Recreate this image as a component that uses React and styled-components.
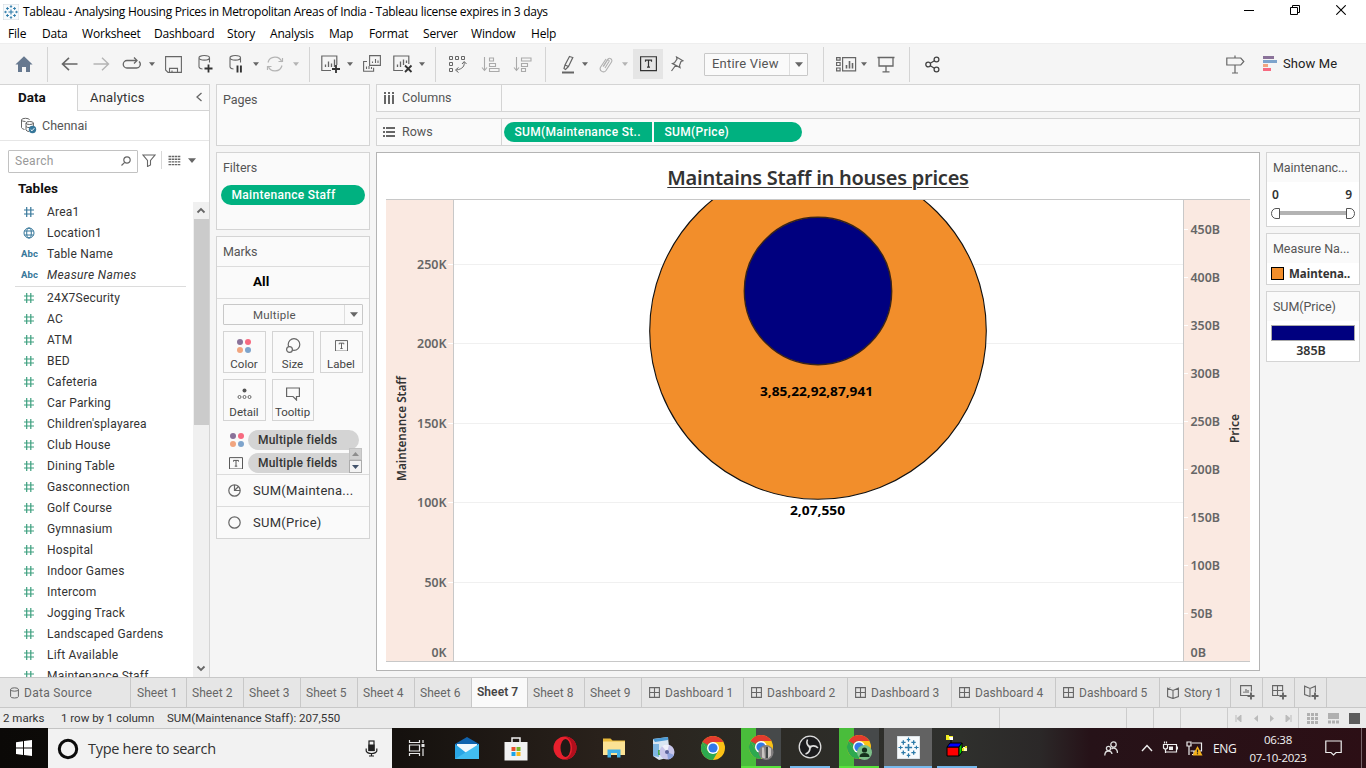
import React from "react";
import styled, { createGlobalStyle } from "styled-components";

const UI = '"Roboto", "Liberation Sans", sans-serif';
const SEGOE = '"Open Sans", "Noto Sans", sans-serif';
const VIZ = '"Noto Sans", "Open Sans", sans-serif';
const LINE = "#d4d4d4";
const GREEN = "#00b180";
const GREY = "#666";

const Global = createGlobalStyle`
  * { box-sizing: border-box; }
  body { margin: 0; background: #f5f5f5; overflow: hidden; }
`;

const Window = styled.div`
  width: 1366px;
  height: 768px;
  display: flex;
  flex-direction: column;
  background: #f5f5f5;
  font: 12px ${UI};
  color: #333;
  white-space: nowrap;
  overflow: hidden;
`;

const Svg = styled.svg`
  display: block;
  flex: none;
  fill: none;
  stroke: ${(p) => p.$c || GREY};
  stroke-width: ${(p) => p.$sw || 1};
`;

function Icon({ w, h, c, sw, children }) {
  return (
    <Svg width={w} height={h} viewBox={`0 0 ${w} ${h}`} $c={c} $sw={sw}>
      {children}
    </Svg>
  );
}

/* ---------- title bar and menu ---------- */

const TitleBar = styled.header`
  height: 24px;
  flex: none;
  display: flex;
  align-items: center;
  background: #fff;
  padding-left: 3px;
  font: 12px ${SEGOE};
  letter-spacing: -0.3px;
  color: #000;
`;
const TitleText = styled.span`
  margin-left: 4px;
  padding-bottom: 1px;
  flex: 1;
`;
const WindowButtons = styled.div`
  display: flex;
  gap: 36px;
  padding-right: 20px;
  margin-top: -4px;
`;
const MenuBar = styled.nav`
  height: 19px;
  flex: none;
  display: flex;
  background: #fff;
  padding-left: 8px;
  font: 12px/19px ${SEGOE};
  letter-spacing: -0.18px;
  color: #000;
`;
const MenuItem = styled.span`
  width: ${(p) => p.$w}px;
`;

const MENU = [
  ["File", 34], ["Data", 40], ["Worksheet", 72], ["Dashboard", 73], ["Story", 43], ["Analysis", 59],
  ["Map", 40], ["Format", 54], ["Server", 48], ["Window", 60], ["Help", 40],
];

function TableauMark({ size }) {
  return (
    <Svg width={size} height={size} viewBox="0 0 16 16" $c="#2c7aa8">
      <rect x="0" y="0" width="16" height="16" fill="#f7fafc" stroke="#b9c3ca" strokeWidth=".6" />
      <path d="M8 5.5v5M5.5 8h5" strokeWidth="1.1" />
      <path d="M8 1v3M6.8 2.5h2.4M8 12v3M6.8 13.5h2.4M1 8h3M2.5 6.8v2.4M12 8h3M13.5 6.8v2.4" strokeWidth=".8" />
      <path d="M4.4 3v3M3 4.5h3M11.6 3v3M10 4.5h3M4.4 10v3M3 11.5h3M11.6 10v3M10 11.5h3" strokeWidth=".9" />
    </Svg>
  );
}

/* ---------- toolbar ---------- */

const Toolbar = styled.div`
  height: 41px;
  flex: none;
  display: flex;
  align-items: center;
  background: #f5f5f5;
  border-top: 1px solid #eee;
`;
const Slot = styled.div`
  width: ${(p) => p.$w}px;
  height: 34px;
  margin-left: ${(p) => p.$gap}px;
  flex: none;
  display: flex;
  align-items: center;
  justify-content: center;
`;
const Separator = styled.div`
  width: 1px;
  height: 35px;
  margin-left: ${(p) => p.$gap}px;
  background: ${LINE};
  flex: none;
`;
const Active = styled.div`
  width: 30px;
  height: 30px;
  margin-left: 5px;
  background: #e5e5e5;
  display: flex;
  align-items: center;
  justify-content: center;
`;
const Select = styled.div`
  width: ${(p) => p.$w}px;
  height: ${(p) => p.$h}px;
  margin-left: ${(p) => p.$gap || 0}px;
  border: 1px solid #c8c8c8;
  border-radius: 1px;
  background: #fafafa;
  display: flex;
  align-items: center;
  font-size: ${(p) => p.$size}px;
  letter-spacing: 0.2px;
  color: #555;
`;
const SelectLabel = styled.span`
  flex: 1;
  padding-left: ${(p) => p.$pad}px;
  padding-bottom: ${(p) => p.$lift || 0}px;
`;
const SelectArrow = styled.span`
  width: 18px;
  height: 100%;
  border-left: 1px solid #dedede;
  display: flex;
  align-items: center;
  justify-content: center;
`;
const ShowMe = styled.div`
  margin-left: 18px;
  display: flex;
  align-items: center;
  gap: 6px;
  font-size: 13px;
  letter-spacing: 0.1px;
  color: #222;
`;
const ShowMeText = styled.span`
  padding-bottom: 2px;
`;

const Caret = ({ c = GREY, big }) => (
  <Svg width={big ? 8 : 6} height={big ? 5 : 4} viewBox="0 0 8 5">
    <path d="M0 .3h8L4 5z" fill={c} stroke="none" />
  </Svg>
);

const HomeIcon = () => (
  <Icon w={18} h={18}>
    <path d="M9 1.3 17.6 9.5H15V17H11v-5H7v5H3V9.500H.4z" fill="#66788f" stroke="none" />
  </Icon>
);
const Cylinder = () => <path d="M2 3.800v9.200q.6 1.800 3.500 2M12.500 3.800v4.700M2 3.800a5.200 2.300 0 1 0 10.500 0a5.200 2.300 0 1 0-10.500 0" />;
const MiniBars = () => <path d="M4.500 12V9.500M7.500 12V6.500M10.500 12V8.500M13.500 12V4.500" strokeWidth="1.300" />;

const BackIcon = () => <Icon w={17} h={14} sw={1.6}><path d="M8 .8 1.500 7 8 13.200M1.500 7H16.500" /></Icon>;
const ForwardIcon = () => <Icon w={17} h={14} sw={1.4} c="#b4b4b4"><path d="M9 .8 15.500 7 9 13.200M15.500 7H.5" /></Icon>;
const RedoIcon = () => (
  <Icon w={20} h={14} sw={1.3}>
    <path d="M6.500 3.500H5a3.300 3.300 0 0 0 0 7.500h9.500a3.700 3.700 0 0 0 2.500-6.500M6 3.500h8.500" />
    <path d="M12 .5 15 3.500l-3 3" />
  </Icon>
);
const SaveIcon = () => <Icon w={17} h={17} sw={1.1}><path d="M.6.6h15.800v15.800H3L.6 14zM4.500 16.400v-4h8v4M7 16.400v-2" /></Icon>;
const AddSourceIcon = () => <Icon w={17} h={20} sw={1.100}><Cylinder /><path d="M11.500 10.500v8M7.500 14.500h8" stroke="#333" strokeWidth="1.800" /></Icon>;
const PauseIcon = () => <Icon w={17} h={20} sw={1.100}><Cylinder /><path d="M9.500 11.500v7M12.900 11.500v7" stroke="#333" strokeWidth="1.900" /></Icon>;
const RefreshIcon = () => (
  <Icon w={18} h={18} c="#b4b4b4" sw={1.200}>
    <path d="M2 7.500a7.200 7.200 0 0 1 13.800-.5M16 10.500a7.200 7.200 0 0 1-13.800.5" />
    <path d="M12.500 6.500h4V3M5.500 11.500h-4V15" />
  </Icon>
);
const NewSheetIcon = () => <Icon w={20} h={18} sw={1.200}><path d="M10 15.500H.8V1h15v9" /><MiniBars /><path d="M15 10v8M11 14h8" stroke="#333" strokeWidth="1.800" /></Icon>;
const DuplicateIcon = () => <Icon w={18} h={18} sw={1.100}><path d="M6.600.6h10.800v9.800H6.600zM4 6.500H.6v9.800h10v-3.500M9.500 8V6.500M12.500 8V4M15 8V5.500M3.500 14v-2.500M6 14v-3M8.500 14v-2" /></Icon>;
const ClearIcon = () => <Icon w={20} h={18} sw={1.200}><path d="M10 15.500H.8V1h15v8" /><path d="M4.500 12V9.500M7.500 12V6.500M10.500 10V4.500M13.500 8V5.500" strokeWidth="1.300" /><path d="m12 10.500 6.500 6.500M18.500 10.500 12 17" stroke="#333" strokeWidth="1.800" /></Icon>;
const SwapIcon = () => <Icon w={19} h={18} sw={1}><path d="M1.500 1.500h3v3h-3zM7.500 1.500h3v3h-3zM13.500 1.500h3v3h-3zM1.500 7.500h3v3h-3zM1.500 13.500h3v3h-3zM16 7c1 4-1.500 7-7.500 8M14 9l2.200-2.500L18.500 9M10.500 12.500 7.500 15l3 2.500" /></Icon>;
const SortAscIcon = () => <Icon w={19} h={17} c="#aaa" sw={1.1}><path d="M3.500 1v13M1 11.500l2.500 3 2.500-3M8.500 2h4v3h-4zM8.500 7.500h6v3h-6zM8.500 12.500h9.500v3H8.500z" /></Icon>;
const SortDescIcon = () => <Icon w={19} h={17} c="#aaa" sw={1.1}><path d="M3.500 1v13M1 11.500l2.500 3 2.500-3M8.500 2H18v3H8.500zM8.500 7.500h6v3h-6zM8.500 12.500h4v3h-4z" /></Icon>;
const HighlightIcon = () => <Icon w={15} h={19} sw={1.200}><path d="M8.500 1.500 11.800 2.500 7.500 11.500 4 10zM4 10 3 13.500l1.500 1 3-3" /><path d="M1 17.500h12" strokeWidth="2" /></Icon>;
const ClipIcon = () => <Icon w={14} h={17} c="#b0b0b0" sw={1.1}><path d="M4 10.500 8.500 3.500a2.200 2.200 0 0 1 4 2.500L7 14.500a3.200 3.200 0 0 1-5.500-3.200L7 3M6 12l4-6.500a1 1 0 0 0-1.800-1L4.500 10.500" /></Icon>;
const TextIcon = ({ s = 17, c = "#333" }) => (
  <Svg width={s} height={s * 0.9} viewBox="0 0 17 15" $c={c} $sw={1.2}>
    <path d="M.6.6h15.800v13.800H.6zM5.500 5.500V4h6v1.500M8.500 4v7M7 11h3" />
  </Svg>
);
const PinIcon = () => <Icon w={14} h={16} sw={1.200}><path d="m6.500 1 6.500 3.800-2 .7-1.500 4 .5 2L2.500 7.500l2-.7L7 3.200zM5.500 9.500 1.500 15" /></Icon>;
const CardsIcon = () => <Icon w={21} h={15} sw={1.200}><path d="M6.600.6h13v13.300h-13zM.6.600h3.500v2.600H.6zM.6 5.500h3.500v3H.6zM.6 11h3.500v2.800H.6z" /><path d="M10.500 11.500V8M13.500 11.500V4M16.500 11.500V6" strokeWidth="1.600" /></Icon>;
const PresentIcon = () => <Icon w={18} h={17} sw={1.300}><path d="M.5 1.500h17M2 1.500v8.500h14V1.500M9 10v5.500M5.500 15.800h7" /></Icon>;
const ShareIcon = () => <Icon w={16} h={17} c="#444" sw={1.300}><circle cx="3.200" cy="8.500" r="2.400" /><circle cx="11.500" cy="3.500" r="2.400" /><circle cx="11.500" cy="13.500" r="2.400" /><path d="m5.300 7.200 4.100-2.500M5.300 9.800l4.100 2.500" /></Icon>;
const SignIcon = () => <Icon w={19} h={19} sw={1.200}><path d="M.8 3h14l3 3.500-3 3.500H.8zM9 .5V3M9 10v8M6 18h6" /></Icon>;
const ShowMeIcon = () => (
  <Icon w={14} h={16}>
    <g stroke="none">
      <path d="M0 0h11v3H0z" fill="#8a7299" /><path d="M0 4h14v3H0z" fill="#7ea4cc" />
      <path d="M0 8h5v3H0z" fill="#f1a57f" /><path d="M0 12h8v3H0z" fill="#f76a80" />
    </g>
  </Icon>
);

function ToolbarRow() {
  return (
    <Toolbar>
      <Slot $gap={15} $w={18}><HomeIcon /></Slot>
      <Separator $gap={14} />
      <Slot $gap={13} $w={17}><BackIcon /></Slot>
      <Slot $gap={15} $w={17}><ForwardIcon /></Slot>
      <Slot $gap={12} $w={20}><RedoIcon /></Slot>
      <Slot $gap={7} $w={6}><Caret /></Slot>
      <Slot $gap={10} $w={17}><SaveIcon /></Slot>
      <Slot $gap={15} $w={17}><AddSourceIcon /></Slot>
      <Slot $gap={14} $w={17}><PauseIcon /></Slot>
      <Slot $gap={8} $w={6}><Caret /></Slot>
      <Slot $gap={7} $w={18}><RefreshIcon /></Slot>
      <Slot $gap={9} $w={6}><Caret c="#b4b4b4" /></Slot>
      <Separator $gap={10} />
      <Slot $gap={11} $w={20}><NewSheetIcon /></Slot>
      <Slot $gap={6} $w={6}><Caret /></Slot>
      <Slot $gap={10} $w={18}><DuplicateIcon /></Slot>
      <Slot $gap={12} $w={20}><ClearIcon /></Slot>
      <Slot $gap={6} $w={6}><Caret /></Slot>
      <Separator $gap={10} />
      <Slot $gap={12} $w={19}><SwapIcon /></Slot>
      <Slot $gap={14} $w={19}><SortAscIcon /></Slot>
      <Slot $gap={13} $w={19}><SortDescIcon /></Slot>
      <Separator $gap={13} />
      <Slot $gap={15} $w={15}><HighlightIcon /></Slot>
      <Slot $gap={6} $w={6}><Caret /></Slot>
      <Slot $gap={11} $w={14}><ClipIcon /></Slot>
      <Slot $gap={9} $w={6}><Caret c="#b4b4b4" /></Slot>
      <Active><TextIcon /></Active>
      <Slot $gap={7} $w={14}><PinIcon /></Slot>
      <Select $w={104} $h={23} $gap={20} $size={13}>
        <SelectLabel $pad={7} $lift={2}>Entire View</SelectLabel>
        <SelectArrow><Caret big /></SelectArrow>
      </Select>
      <Separator $gap={15} />
      <Slot $gap={12} $w={21}><CardsIcon /></Slot>
      <Slot $gap={4} $w={6}><Caret /></Slot>
      <Slot $gap={10} $w={18}><PresentIcon /></Slot>
      <Separator $gap={14} />
      <Slot $gap={15} $w={16}><ShareIcon /></Slot>
      <Slot $gap={285} $w={19}><SignIcon /></Slot>
      <ShowMe><ShowMeIcon /><ShowMeText>Show Me</ShowMeText></ShowMe>
    </Toolbar>
  );
}

/* ---------- data pane ---------- */

const Main = styled.main`
  height: 593px;
  flex: none;
  display: flex;
`;
const DataPane = styled.aside`
  width: 210px;
  height: 593px;
  flex: none;
  display: flex;
  flex-direction: column;
  background: #fff;
  border-right: 1px solid ${LINE};
  border-top: 1px solid ${LINE};
  overflow: hidden;
`;
const PaneTabs = styled.div`
  display: flex;
  height: 26px;
  flex: none;
`;
const DataTab = styled.div`
  width: 77px;
  padding-left: 18px;
  font: 700 13.500px/25px ${UI};
  color: #111;
`;
const AnalyticsTab = styled.div`
  flex: 1;
  display: flex;
  align-items: center;
  justify-content: space-between;
  padding: 0 6px 1px 12px;
  background: #fafafa;
  border-left: 1px solid ${LINE};
  border-bottom: 1px solid ${LINE};
  font-size: 13px;
  letter-spacing: 0.2px;
`;
const SourceRow = styled.div`
  height: 30px;
  flex: none;
  display: flex;
  align-items: center;
  gap: 5px;
  padding: 0 0 1px 20px;
  border-bottom: 1px solid #e6e6e6;
  font-size: 12.500px;
  color: #555;
`;
const SearchRow = styled.div`
  height: 24px;
  margin-top: 8px;
  padding-left: 8px;
  flex: none;
  display: flex;
  align-items: center;
`;
const SearchBox = styled.div`
  width: 130px;
  height: 23px;
  border: 1px solid #c2c2c2;
  border-radius: 1px;
  display: flex;
  align-items: center;
  justify-content: space-between;
  padding: 0 6px;
  color: #999;
  letter-spacing: 0.3px;
`;
const SearchTools = styled.div`
  display: flex;
  align-items: center;
  padding: 0 0 2px 4px;
`;
const ToolDivider = styled.span`
  width: 1px;
  height: 18px;
  margin: 0 6px 0 5px;
  background: #d8d8d8;
`;
const ArrowGap = styled.span`
  margin-left: 7px;
`;
const TablesTitle = styled.div`
  height: 28px;
  flex: none;
  padding-left: 18px;
  font: 700 13.500px/31px ${UI};
  color: #111;
`;
const FieldArea = styled.div`
  flex: 1;
  min-height: 0;
  display: flex;
`;
const FieldList = styled.div`
  width: 193px;
  overflow: hidden;
`;
const Field = styled.div`
  height: 21px;
  display: flex;
  align-items: center;
  font-style: ${(p) => (p.$italic ? "italic" : "normal")};
  letter-spacing: ${(p) => (p.$italic ? 0.35 : 0.2)}px;
  color: #333;
`;
const FieldIcon = styled.span`
  width: 47px;
  padding-left: ${(p) => (p.$abc ? 21 : 23)}px;
  flex: none;
  font: 700 9.500px ${UI};
  letter-spacing: 0.1px;
  color: #36779a;
`;
const ListRule = styled.hr`
  height: 1px;
  margin: 1px 7px 0 15px;
  border: 0;
  background: #dcdcdc;
`;
const Scrollbar = styled.div`
  width: 16px;
  margin-top: 1px;
  display: flex;
  flex-direction: column;
  align-items: center;
  background: #f0f0f0;
`;
const ScrollThumb = styled.div`
  width: 15px;
  height: 206px;
  background: #cbcbcb;
  margin-bottom: auto;
`;
const ScrollCap = styled.div`
  height: 17px;
  display: flex;
  align-items: center;
`;

const Hash = ({ c }) => <Icon w={12} h={12} c={c} sw={1.200}><path d="M3.700 1v10M7.800 1v10M1 4h10M1 8h10" /></Icon>;
const Globe = () => <Icon w={12} h={12} c="#36779a"><circle cx="6" cy="6" r="5" /><ellipse cx="6" cy="6" rx="2.300" ry="5" /><path d="M1.500 4h9M1.500 8h9" /></Icon>;

const DIMENSIONS = [["hash", "Area1"], ["globe", "Location1"], ["abc", "Table Name"], ["abc", "Measure Names", true]];
const MEASURES = [
  "24X7Security", "AC", "ATM", "BED", "Cafeteria", "Car Parking", "Children'splayarea", "Club House", "Dining Table",
  "Gasconnection", "Golf Course", "Gymnasium", "Hospital", "Indoor Games", "Intercom", "Jogging Track",
  "Landscaped Gardens", "Lift Available", "Maintenance Staff",
];

function DataPanel() {
  return (
    <DataPane>
      <PaneTabs>
        <DataTab>Data</DataTab>
        <AnalyticsTab>
          Analytics
          <Icon w={8} h={10} sw={1.300}><path d="M6.500 1 2 5l4.500 4" /></Icon>
        </AnalyticsTab>
      </PaneTabs>
      <SourceRow>
        <Icon w={17} h={17}>
          <path d="M1.500 3v7.500q.5 1.500 3 2M1.500 3a4 1.700 0 0 1 8 0M1.500 3a4 1.700 0 0 0 4 1.500" />
          <path d="M6 6v7q.5 1.300 3 1.500M6 6a3.700 1.500 0 1 0 7.400 0a3.700 1.500 0 1 0-7.400 0M13.400 6v3M6 9.500q1 1.200 4 1.200" />
          <circle cx="12.500" cy="12.500" r="3.700" fill="#36779a" stroke="none" />
          <path d="m10.700 12.500 1.300 1.300 2.300-2.600" stroke="#fff" />
        </Icon>
        Chennai
      </SourceRow>
      <SearchRow>
        <SearchBox>
          Search
          <Icon w={10} h={10} sw={1.200}><circle cx="6" cy="4" r="3.200" /><path d="M3.700 6.300.5 9.500" /></Icon>
        </SearchBox>
        <SearchTools>
          <Icon w={14} h={13} sw={1.100}><path d="M1 1h12L8.500 6.500V11l-3 1.500v-6z" /></Icon>
          <ToolDivider />
          <Icon w={13} h={11} sw={1.400}><path d="M.5 1.500h12M.5 4.200h12M.5 6.900h12M.5 9.600h12" strokeDasharray="2.500 .6" /></Icon>
          <ArrowGap><Caret big /></ArrowGap>
        </SearchTools>
      </SearchRow>
      <TablesTitle>Tables</TablesTitle>
      <FieldArea>
        <FieldList>
          {DIMENSIONS.map(([kind, label, italic]) => (
            <Field key={label} $italic={italic}>
              <FieldIcon $abc={kind === "abc"}>
                {kind === "hash" ? <Hash c="#36779a" /> : kind === "globe" ? <Globe /> : "Abc"}
              </FieldIcon>
              {label}
            </Field>
          ))}
          <ListRule />
          {MEASURES.map((label) => (
            <Field key={label}>
              <FieldIcon><Hash c="#3c9f7e" /></FieldIcon>
              {label}
            </Field>
          ))}
        </FieldList>
        <Scrollbar>
          <ScrollCap><Icon w={10} h={7} sw={1.800}><path d="M1.500 5.500 5 2l3.500 3.500" /></Icon></ScrollCap>
          <ScrollThumb />
          <ScrollCap><Icon w={10} h={7} sw={1.800}><path d="M1.500 1.500 5 5l3.500-3.500" /></Icon></ScrollCap>
        </Scrollbar>
      </FieldArea>
    </DataPane>
  );
}

/* ---------- cards ---------- */

const CardColumn = styled.div`
  width: 154px;
  margin-left: 6px;
  flex: none;
  display: flex;
  flex-direction: column;
  gap: 6px;
`;
const Card = styled.section`
  height: ${(p) => p.$h}px;
  flex: none;
  background: ${(p) => p.$bg || "#fafafa"};
  border: 1px solid ${LINE};
`;
const CardTitle = styled.div`
  height: 29px;
  padding-left: 6px;
  font-size: 12.500px;
  line-height: 29px;
  letter-spacing: -0.05px;
  color: #555;
  background: #fafafa;
`;
const Pill = styled.div`
  width: ${(p) => p.$w}px;
  height: 20px;
  padding-left: ${(p) => (p.$grey ? 10 : 10.5)}px;
  border-radius: ${(p) => p.$radius || "10px"};
  background: ${(p) => (p.$grey ? "#d4d4d4" : GREEN)};
  color: ${(p) => (p.$grey ? "#333" : "#fff")};
  font-weight: 500;
  font-size: 12px;
  line-height: 20px;
  letter-spacing: ${(p) => (p.$grey ? 0.22 : 0.3)}px;
`;
const FilterBody = styled.div`
  padding: 3px 0 0 4px;
`;
const AllRow = styled.div`
  height: 33px;
  border-top: 1px solid #dcdcdc;
  border-bottom: 1px solid #dcdcdc;
  padding-left: 36px;
  font: 700 13.500px/29px ${UI};
  color: #000;
`;
const MarkBody = styled.div`
  position: relative;
  height: 175px;
  padding: 5px 6px 0;
`;
const MarkGrid = styled.div`
  display: grid;
  grid-template-columns: 43px 42px 43px;
  gap: 6px;
  margin-top: 6px;
`;
const MarkButton = styled.div`
  height: 42px;
  border: 1px solid ${LINE};
  display: flex;
  flex-direction: column;
  align-items: center;
  justify-content: space-between;
  padding: 5px 1px 1px 0;
  font-size: 11.500px;
  color: #444;
`;
const MarkIcon = styled.span`
  height: 17px;
  display: flex;
  align-items: center;
`;
const FieldPillRow = styled.div`
  display: flex;
  align-items: center;
  margin-top: ${(p) => p.$gap}px;
`;
const PillIcon = styled.span`
  width: 25px;
  padding-left: 6px;
`;
const Spinner = styled.div`
  position: absolute;
  right: 7px;
  bottom: 1px;
  width: 13px;
`;
const SpinButton = styled.div`
  height: ${(p) => p.$h}px;
  display: flex;
  align-items: center;
  justify-content: center;
  background: ${(p) => p.$bg};
  border: 1px solid ${(p) => p.$bd};
`;
const MarkLayer = styled.div`
  height: 32px;
  display: flex;
  align-items: center;
  gap: 12px;
  padding-left: 11px;
  border-top: 1px solid #dcdcdc;
  font-size: 13px;
  letter-spacing: 0.27px;
  color: #333;
`;

const ColorDots = () => (
  <Icon w={16} h={16}>
    <g stroke="none">
      <circle cx="4" cy="4" r="3" fill="#8a7299" /><circle cx="12" cy="4" r="3" fill="#f76a80" />
      <circle cx="4" cy="12" r="3" fill="#f1a57f" /><circle cx="12" cy="12" r="3" fill="#7ea4cc" />
    </g>
  </Icon>
);

const MARKS = [
  ["Color", <ColorDots />],
  ["Size", <Icon w={16} h={16} sw={1.200}><circle cx="9" cy="6.500" r="5.800" /><circle cx="4.500" cy="11.500" r="2.900" fill="#fafafa" /></Icon>],
  ["Label", <TextIcon s={13} c="#555" />],
  ["Detail", <Icon w={15} h={12}><circle cx="7.500" cy="2.500" r="2" fill="#555" stroke="none" /><circle cx="2.500" cy="9" r="1.500" /><circle cx="7.500" cy="9" r="1.500" /><circle cx="12.500" cy="9" r="1.500" /></Icon>],
  ["Tooltip", <Icon w={14} h={14} sw={1.200}><path d="M.6 1h12.800v8.500h-2.900V13L7 9.500H.6z" /></Icon>],
];

function Cards() {
  return (
    <CardColumn>
      <Card $h={62}><CardTitle>Pages</CardTitle></Card>
      <Card $h={78}>
        <CardTitle>Filters</CardTitle>
        <FilterBody><Pill $w={144}>Maintenance Staff</Pill></FilterBody>
      </Card>
      <Card $h={303}>
        <CardTitle>Marks</CardTitle>
        <AllRow>All</AllRow>
        <MarkBody>
          <Select $w={140} $h={21} $size={11.5}>
            <SelectLabel $pad={29}>Multiple</SelectLabel>
            <SelectArrow><Caret big /></SelectArrow>
          </Select>
          <MarkGrid>
            {MARKS.map(([label, icon]) => (
              <MarkButton key={label}><MarkIcon>{icon}</MarkIcon>{label}</MarkButton>
            ))}
          </MarkGrid>
          <FieldPillRow $gap={9}><PillIcon><ColorDots /></PillIcon><Pill $w={111} $grey>Multiple fields</Pill></FieldPillRow>
          <FieldPillRow $gap={3}><PillIcon><TextIcon s={14} c="#555" /></PillIcon><Pill $w={111} $grey>Multiple fields</Pill></FieldPillRow>
          <Spinner>
            <SpinButton $h={12} $bg="#d0d0d0" $bd="#c2c2c2"><Svg width="7" height="4" viewBox="0 0 7 4"><path d="M0 4h7L3.500 0z" fill="#8d8d8d" stroke="none" /></Svg></SpinButton>
            <SpinButton $h={13} $bg="#f3f3f3" $bd="#acacac"><Svg width="7" height="4" viewBox="0 0 7 4"><path d="M0 0h7L3.500 4z" fill="#43536b" stroke="none" /></Svg></SpinButton>
          </Spinner>
        </MarkBody>
        <MarkLayer>
          <Icon w={13} h={13} sw={1.200}><circle cx="6.500" cy="6.500" r="5.700" /><path d="M6.500 1v5.500H12M6.500 6.500l4-4" /></Icon>
          SUM(Maintena...
        </MarkLayer>
        <MarkLayer>
          <Icon w={13} h={13} sw={1.200}><circle cx="6.500" cy="6.500" r="5.700" /></Icon>
          SUM(Price)
        </MarkLayer>
      </Card>
    </CardColumn>
  );
}

/* ---------- shelves, view and legends ---------- */

const Workspace = styled.div`
  width: 984px;
  margin-left: 6px;
  display: flex;
  flex-direction: column;
  gap: 6px;
`;
const Shelf = styled.div`
  height: 28px;
  flex: none;
  display: flex;
  background: #fafafa;
  border: 1px solid ${LINE};
`;
const ShelfName = styled.div`
  width: 125px;
  display: flex;
  align-items: center;
  gap: 7px;
  padding: 0 0 1px 6px;
  border-right: 1px solid ${LINE};
  font-size: 12.500px;
  letter-spacing: 0;
  color: #555;
`;
const ShelfPills = styled.div`
  display: flex;
  align-items: center;
  gap: 2px;
  padding-left: 2px;
`;
const ViewRow = styled.div`
  display: flex;
  gap: 6px;
`;
const View = styled.section`
  width: 884px;
  height: 519px;
  flex: none;
  padding-left: 9px;
  background: #fff;
  border: 1px solid #b4b4b4;
`;
const ViewTitle = styled.h1`
  width: 864px;
  height: 46px;
  margin: 0;
  text-align: center;
  font: 600 20px/49px ${VIZ};
  letter-spacing: -0.25px;
  color: #333;
  text-decoration: underline;
  text-decoration-thickness: 1px;
  text-underline-offset: 2px;
`;
const Plot = styled.svg`
  display: block;
  font-family: ${VIZ};
  font-weight: 600;
  font-size: 12.500px;
`;
const Legends = styled.div`
  width: 94px;
  display: flex;
  flex-direction: column;
  gap: 6px;
`;
const RangeValues = styled.div`
  display: flex;
  justify-content: space-between;
  padding: 5px 7px 0 5px;
  font: 600 12px/16px ${VIZ};
`;
const Swatch = styled.span`
  width: 13px;
  height: 13px;
  flex: none;
  background: #f28e2b;
  border: 1px solid #000;
`;
const LegendItem = styled.div`
  display: flex;
  align-items: center;
  gap: 5px;
  padding: 2px 4px;
  font: 700 11.500px/17px ${VIZ};
`;
const Ramp = styled.div`
  height: 16px;
  margin: 4px 4px 0;
  background: #00007f;
  border: 1px solid #aaa;
`;
const RampLabel = styled.div`
  padding-right: 4px;
  text-align: center;
  font: 600 12.500px/19px ${VIZ};
`;

const LEFT_AXIS = [["250K", 65], ["200K", 144], ["150K", 224], ["100K", 303], ["50K", 383]];
const RIGHT_AXIS = ["450B", "400B", "350B", "300B", "250B", "200B", "150B", "100B", "50B"];

function Chart() {
  return (
    <Plot width="864" height="463" viewBox="0 0 864 463">
      <rect x="0" y="0" width="67" height="463" fill="#fae9e1" />
      <rect x="798" y="0" width="66" height="463" fill="#fae9e1" />
      {LEFT_AXIS.map(([label, y]) => (
        <g key={label}>
          <path d={`M68 ${y + 0.5}H797`} stroke="#f0f0f0" />
          <path d={`M62 ${y + 0.5}H67`} stroke="#fff" />
          <text x="60.500" y={y + 5} textAnchor="end" fill="#666" textLength={label.length === 4 ? 29.5 : 22} lengthAdjust="spacingAndGlyphs">{label}</text>
        </g>
      ))}
      <text x="60.500" y="458" textAnchor="end" fill="#666" textLength="15" lengthAdjust="spacingAndGlyphs">0K</text>
      {RIGHT_AXIS.map((label, i) => (
        <g key={label}>
          <path d={`M798 ${30.5 + i * 48}h4`} stroke="#fff" />
          <text x="804.500" y={35 + i * 48} fill="#666" textLength={label.length === 4 ? 29.5 : 22} lengthAdjust="spacingAndGlyphs">{label}</text>
        </g>
      ))}
      <text x="804.500" y="458" fill="#666" textLength="15.500" lengthAdjust="spacingAndGlyphs">0B</text>
      <circle cx="432" cy="132" r="168.300" fill="#f28e2b" stroke="#111" strokeWidth="1.100" />
      <circle cx="432" cy="92" r="73.700" fill="#00007f" stroke="#3a2418" strokeWidth="1.400" />
      <path d="M0 .5H864M0 462.500H864" stroke="#c8c8c8" />
      <path d="M67.500 0V463M797.500 0V463" stroke="#c8c8c8" />
      <text x="374" y="197" fontWeight="700" fill="#000" textLength="113" lengthAdjust="spacingAndGlyphs">3,85,22,92,87,941</text>
      <text x="404" y="316" fontWeight="700" fill="#000" textLength="55" lengthAdjust="spacingAndGlyphs">2,07,550</text>
      <text transform="translate(20 282) rotate(-90)" fill="#333" fontSize="12" textLength="105" lengthAdjust="spacingAndGlyphs">Maintenance Staff</text>
      <text transform="translate(853 244) rotate(-90)" fill="#333" fontSize="12" textLength="29" lengthAdjust="spacingAndGlyphs">Price</text>
    </Plot>
  );
}

function WorkArea() {
  return (
    <Workspace>
      <Shelf>
        <ShelfName>
          <Icon w={12} h={12} sw={2}><path d="M2 0v2M6 0v2M10 0v2M2 3v9M6 3v9M10 3v9" /></Icon>
          Columns
        </ShelfName>
      </Shelf>
      <Shelf>
        <ShelfName>
          <Icon w={12} h={12} sw={2}><path d="M0 2h2M0 6h2M0 10h2M3 2h9M3 6h9M3 10h9" /></Icon>
          Rows
        </ShelfName>
        <ShelfPills>
          <Pill $w={148} $radius="10px 0 0 10px">SUM(Maintenance St..</Pill>
          <Pill $w={148} $radius="0 10px 10px 0">SUM(Price)</Pill>
        </ShelfPills>
      </Shelf>
      <ViewRow>
        <View>
          <ViewTitle>Maintains Staff in houses prices</ViewTitle>
          <Chart />
        </View>
        <Legends>
          <Card $h={75} $bg="#fff">
            <CardTitle>Maintenanc...</CardTitle>
            <RangeValues><span>0</span><span>9</span></RangeValues>
            <Icon w={92} h={22}>
              <path d="M12 10h70" stroke="#b3b3b3" strokeWidth="4" />
              <path d="M12.500 5.500v10H9a4.500 5 0 0 1 0-10zM79.500 5.500v10H83a4.500 5 0 0 0 0-10z" fill="#fff" stroke="#555" />
            </Icon>
          </Card>
          <Card $h={52} $bg="#fff">
            <CardTitle>Measure Na...</CardTitle>
            <LegendItem><Swatch />Maintena..</LegendItem>
          </Card>
          <Card $h={71} $bg="#fff">
            <CardTitle>SUM(Price)</CardTitle>
            <Ramp />
            <RampLabel>385B</RampLabel>
          </Card>
        </Legends>
      </ViewRow>
    </Workspace>
  );
}

/* ---------- sheet tabs and status ---------- */

const SheetBar = styled.div`
  height: 31px;
  flex: none;
  display: flex;
  background: #e6e6e6;
  border-top: 1px solid #c8c8c8;
  border-bottom: 1px solid #c8c8c8;
`;
const SheetTab = styled.div`
  width: ${(p) => p.$w}px;
  display: flex;
  align-items: center;
  gap: 5px;
  padding-left: ${(p) => p.$pad || 5}px;
  padding-bottom: ${(p) => (p.$active ? 2 : 0)}px;
  border-right: 1px solid #c8c8c8;
  background: ${(p) => (p.$active ? "#fafafa" : "transparent")};
  font-weight: ${(p) => (p.$active ? 600 : 400)};
  color: ${(p) => (p.$active ? "#444" : "#666")};
  font-size: 12px;
  letter-spacing: ${(p) => (p.$wide ? 0.28 : 0.05)}px;
`;
const StatusBar = styled.div`
  height: 20px;
  flex: none;
  display: flex;
  align-items: center;
  background: #ebebeb;
  padding-left: 3px;
  font-size: 11.500px;
  color: #333;
`;
const StatusText = styled.span`
  width: ${(p) => p.$w}px;
`;
const StatusCell = styled.div`
  width: ${(p) => p.$w}px;
  height: 20px;
  border-left: 1px solid #ccc;
  display: flex;
  align-items: center;
  gap: ${(p) => p.$gap || 0}px;
  padding-left: ${(p) => p.$pad || 0}px;
`;

const DashIcon = () => <Icon w={11} h={11} sw={1.100}><path d="M.6.6h9.800v9.800H.6zM5.500.6v9.800M.6 5.500h9.800" /></Icon>;
const StoryPath = () => <path d="M6 3.500v8M.6 1.200 6 3.500l5.400-2.300v8.300L6 11.500.6 9.500zM3 1v-.5" />;
const Plus = () => <path d="M11 7.500v7M7.500 11h7" strokeWidth="1.900" />;

const SHEETS = [["Sheet 1", 56, 6], ["Sheet 2", 57], ["Sheet 3", 57], ["Sheet 5", 57], ["Sheet 4", 57], ["Sheet 6", 57], ["Sheet 7", 56], ["Sheet 8", 57], ["Sheet 9", 57]];
const DASHBOARDS = [["Dashboard 1", 102], ["Dashboard 2", 104], ["Dashboard 3", 104], ["Dashboard 4", 104], ["Dashboard 5", 104]];

function SheetTabs() {
  return (
    <SheetBar>
      <SheetTab $w={131} $pad={10} $wide>
        <Icon w={9} h={12}><path d="M.6 2.500v7a3.900 1.500 0 0 0 7.800 0v-7M.6 2.500a3.900 1.700 0 0 0 7.800 0a3.900 1.700 0 0 0-7.800 0" /></Icon>
        Data Source
      </SheetTab>
      {SHEETS.map(([label, w, pad]) => (
        <SheetTab key={label} $w={w} $pad={pad} $active={label === "Sheet 7"}>{label}</SheetTab>
      ))}
      {DASHBOARDS.map(([label, w]) => (
        <SheetTab key={label} $w={w} $pad={7}><DashIcon />{label}</SheetTab>
      ))}
      <SheetTab $w={71} $pad={7}><Icon w={12} h={12} sw={1.100}><StoryPath /></Icon>Story 1</SheetTab>
      <SheetTab $w={32} $pad={9}><Icon w={15} h={15} sw={1.100}><path d="M8 10.500H.6V.6h10.800v6M4 8V6.500M6 8V4M8 8V5" /><Plus /></Icon></SheetTab>
      <SheetTab $w={32} $pad={9}><Icon w={15} h={15} sw={1.100}><path d="M7.500 10.500H.6V.6h10v6M5.500.6v10M.6 5.500h10" /><Plus /></Icon></SheetTab>
      <SheetTab $w={32} $pad={9}><Icon w={15} h={15} sw={1.100}><path d="M6 3.500v8L.6 9.500V1.200L6 3.500l5.400-2.300V7" /><Plus /></Icon></SheetTab>
    </SheetBar>
  );
}

function Status() {
  return (
    <StatusBar>
      <StatusText $w={58}>2 marks</StatusText>
      <StatusText $w={106}>1 row by 1 column</StatusText>
      <StatusText $w={832}>SUM(Maintenance Staff): 207,550</StatusText>
      <StatusCell $w={127} />
      <StatusCell $w={27} />
      <StatusCell $w={27} />
      <StatusCell $w={47} />
      <StatusCell $w={71} $pad={7} $gap={11}>
        {["M1 0v7M6 0v7L2 3.500z", "M5 0v7L1 3.500z", "M1 0v7l4-3.500z", "M1 0v7l4-3.500zM6 0v7"].map((d, i) => (
          <Icon key={i} w={i === 1 || i === 2 ? 5 : 7} h={7} c="#bbb"><path d={d} fill="#bbb" strokeWidth={i % 3 ? 0 : 1} /></Icon>
        ))}
      </StatusCell>
      <StatusCell $w={68} $pad={8} $gap={10}>
        <Icon w={11} h={11} sw={3} c="#b0b0b0"><path d="M0 1.500h11M0 5.500h11M0 9.500h11" strokeDasharray="3 1" /></Icon>
        <Icon w={11} h={11} c="#b0b0b0"><path d="M0 0h11v6H0z" fill="#b0b0b0" stroke="none" /><path d="M0 9h11" strokeWidth="3" strokeDasharray="3 1" /></Icon>
        <Icon w={11} h={11}><path d="M0 0h11v11H0z" fill="#5c5c5c" stroke="none" /></Icon>
      </StatusCell>
    </StatusBar>
  );
}

/* ---------- taskbar ---------- */

const Taskbar = styled.footer`
  height: 40px;
  flex: none;
  display: flex;
  background: linear-gradient(90deg, #0b0907 0, #15110e 400px, #29211b 600px, #2b2923 720px, #2f302d 960px, #2b2828 1040px, #261218 1090px, #2c0f15 1366px);
  color: #f3f3f3;
  font-family: ${SEGOE};
`;
const Task = styled.div`
  width: ${(p) => p.$w}px;
  height: 40px;
  flex: none;
  display: flex;
  align-items: center;
  justify-content: center;
  padding-left: ${(p) => p.$shift || 0}px;
`;
const RunningTask = styled.div`
  width: ${(p) => p.$w || 40}px;
  height: 40px;
  flex: none;
  display: flex;
  align-items: center;
  justify-content: center;
  margin: 0 ${(p) => p.$mr}px 0 ${(p) => p.$ml || 0}px;
  background: ${(p) => p.$bg || "transparent"};
  border-bottom: 2px solid ${(p) => p.$bar || "#76b9ed"};
`;
const TaskSearch = styled.div`
  width: 344px;
  flex: none;
  display: flex;
  align-items: center;
  gap: 9px;
  padding: 0 14px 0 9px;
  background: #f2f2f2;
  border-top: 1px solid #c4c4c4;
  color: #333;
  font-size: 14.500px;
  letter-spacing: -0.3px;
`;
const SearchPrompt = styled.span`
  flex: 1;
`;
const Tray = styled.div`
  margin-left: auto;
  display: flex;
  align-items: center;
`;
const TrayItem = styled.span`
  margin-right: ${(p) => p.$gap}px;
`;
const Clock = styled.div`
  width: 64px;
  flex: none;
  margin-left: 9px;
  text-align: center;
  font-size: 11.500px;
  line-height: 18px;
  letter-spacing: -0.3px;
  padding-top: 2px;
`;
const Lang = styled.span`
  align-self: center;
  margin-left: 10px;
  width: 24px;
  font-size: 12px;
  letter-spacing: -0.4px;
`;
const PeekEdge = styled.div`
  width: 1px;
  margin-left: 5px;
  margin-right: 4px;
  background: #77646a;
`;

function Chrome({ badge }) {
  return (
    <Svg width="26" height="26" viewBox="0 0 26 26">
      <g stroke="none">
        <circle cx="13" cy="13" r="12" fill="#fbc116" />
        <path d="M2.600 7A12 12 0 0 0 13 25l5.200-9L13 18.500 7.800 16z" fill="#2da94f" />
        <path d="M2.600 7 7.800 16 8 10 13 7z" fill="#2da94f" />
        <path d="M2.600 7A12 12 0 0 1 23.400 7H13a6 6 0 0 0-5.200 3z" fill="#e33b2e" />
        <circle cx="13" cy="13" r="6" fill="#fff" />
        <circle cx="13" cy="13" r="4.600" fill="#3279e8" />
        {badge === "photo" && <><circle cx="18" cy="18.500" r="7.500" fill="#827f80" /><path d="M14 13.500h2l1 11-3-1zM20 12.500l3 2v7l-3 3z" fill="#c9c4c2" /><path d="M18 13h2v11h-2z" fill="#3f4546" /></>}
        {badge === "person" && <><circle cx="18.500" cy="18.500" r="7.500" fill="#7cc089" /><circle cx="18.500" cy="16" r="2.600" fill="#15311c" /><path d="M13.500 23q0-4 5-4t5 4z" fill="#15311c" /></>}
      </g>
    </Svg>
  );
}

const GREEN_TILE = "linear-gradient(90deg, #49bd3b 0 15px, #46494a 15px)";

function TaskBar() {
  return (
    <Taskbar>
      <Task $w={48}>
        <Icon w={16} h={16}><path d="M0 2.200 7 1.200V7.600H0zM8 1.100 16 0v7.600H8zM0 8.500h7v6.400L0 14zM8 8.500h8V16l-8-1.100z" fill="#fff" stroke="none" /></Icon>
      </Task>
      <TaskSearch>
        <Icon w={22} h={22} c="#0b0b0b" sw={3}><circle cx="11" cy="11" r="8.700" /></Icon>
        <SearchPrompt>Type here to search</SearchPrompt>
        <Icon w={13} h={17} c="#222" sw={1.200}><rect x="4" y="1" width="5" height="9.500" /><path d="M4 5h5v5.500H4z" fill="#222" /><path d="M1.200 8.500v2.500q1 2.500 5.300 2.500t5.300-2.500V8.500M6.500 13.500V16M4 16h5" /></Icon>
      </TaskSearch>
      <Task $w={48}>
        <Icon w={17} h={16} c="#e8e8e8" sw={1.200}><path d="M1.500 0v2.500h10V0M1.500 5h10v6h-10zM1.500 16v-2.500h10V16M15 0v3M15 8.500V16" /><path d="M13.500 4h3v3h-3z" fill="#e8e8e8" stroke="none" /></Icon>
      </Task>
      <Task $w={49} $shift={5}>
        <Icon w={26} h={24}><g stroke="none"><path d="M1 8 13 1l12 7v5H1z" fill="#1163ad" /><path d="M3 8h20v10H3z" fill="#f2f8fc" /><path d="M1 8 13 17.500 25 8v15H1z" fill="#2aa6e5" /><path d="M1 23 25 8v15z" fill="#42bdf0" /></g></Icon>
      </Task>
      <Task $w={49} $shift={4}>
        <Icon w={24} h={25}><path d="M8 7V2h8v5" stroke="#eee" strokeWidth="1.500" /><g stroke="none"><path d="M.5 6h23v18.500H.5z" fill="#f2f2f2" /><path d="M7.500 11h4v4h-4z" fill="#e8502b" /><path d="M12.500 11h4v4h-4z" fill="#78b82a" /><path d="M7.500 16h4v4h-4z" fill="#1ca4e8" /><path d="M12.500 16h4v4h-4z" fill="#f7b71b" /></g></Icon>
      </Task>
      <Task $w={49} $shift={5}>
        <Icon w={24} h={24}><g stroke="none"><ellipse cx="12" cy="12" rx="11.500" ry="11.500" fill="#e8202d" /><path d="M12 .5a11.500 11.500 0 0 1 0 23q7-3 7-11.500T12 .5" fill="#b10f1d" /><ellipse cx="12.500" cy="12" rx="5" ry="9" fill="#211a16" /></g></Icon>
      </Task>
      <Task $w={49} $shift={5}>
        <Icon w={22} h={22}><g stroke="none"><path d="M0 1.500h7.500l2 2H22V7H0z" fill="#e9b93a" /><path d="M0 4.500h22V18H0z" fill="#fbe294" /><path d="M4.500 20.500v-8h13v8h-3.500V16H8v4.500z" fill="#3fb0e6" /></g></Icon>
      </Task>
      <Task $w={49} $shift={4}>
        <Icon w={25} h={25}><g stroke="none"><path d="M3 3 18 1l2 20-11 3-6-4z" fill="#d9e6f2" /><path d="M3 3 18 1v3L5 6z" fill="#4c9bd6" /><path d="M3 8h6v13l-6-1z" fill="#7fb6e2" /><path d="M8 14h5v5H8z" fill="#45a94c" /><circle cx="17" cy="16" r="7.500" fill="#c8c6ea" /><path d="M17 16 12 10a7.500 7.500 0 0 1 7-1z" fill="#f0f2fb" /><path d="m17 16 7 3a7.500 7.500 0 0 1-6 4.500z" fill="#8ea2dd" /><circle cx="17" cy="16" r="2" fill="#5c629b" /></g></Icon>
      </Task>
      <Task $w={55}><Chrome /></Task>
      <RunningTask $ml={1} $mr={9} $bg={GREEN_TILE} $bar="#58e33c"><Chrome badge="photo" /></RunningTask>
      <RunningTask $mr={9}>
        <Icon w={24} h={24} c="#ddd" sw={1.300}><circle cx="12" cy="12" r="10.800" fill="#1b1b1d" /><path d="M12 12q-4.500-2.500-2.500-7.500M12 12q4.500-2.800 8 1M12 12q.3 5.500-4.500 7" strokeWidth="1.600" /><circle cx="12" cy="12" r="1.500" fill="#ddd" stroke="none" /></Icon>
      </RunningTask>
      <RunningTask $mr={5} $bg={GREEN_TILE} $bar="#58e33c"><Chrome badge="person" /></RunningTask>
      <RunningTask $w={48} $mr={5} $bg="#626262"><TableauMark size={23} /></RunningTask>
      <RunningTask $mr={0}>
        <Icon w={24} h={24}><g stroke="#000" strokeWidth="1"><path d="M2 12h12v9H2z" fill="#f00" /><path d="m2 12 3-4h12l-3 4z" fill="#00f" /><path d="m14 12 3-4v9l-3 4z" fill="#0c0" /><path d="M6 8V3" /></g><path d="M1 0h3v1h4v4H1z" fill="#f2ee20" stroke="none" /><path d="M4 2h4v3H5z" fill="#fff" stroke="none" /><path d="M18 12h4v4h-4z" fill="#fffbbd" stroke="none" /><path d="M17 13h2v3h-2zM20 11h2v2h-2z" fill="#e6df21" stroke="none" /></Icon>
      </RunningTask>
      <Tray>
        <TrayItem $gap={23}><Icon w={14} h={15} c="#ddd" sw={1.300}><circle cx="9.500" cy="3.500" r="2.700" /><circle cx="4.500" cy="7.500" r="2.100" /><path d="M.8 14.500q0-4.500 3.700-4.500 3 0 3.500 3M7.500 8q2-2 4.500 0 1.500 1.300 1.500 4" /></Icon></TrayItem>
        <TrayItem $gap={9}><Icon w={12} h={8} c="#eee" sw={1.400}><path d="m1 7 5-5.500L11 7" /></Icon></TrayItem>
        <TrayItem $gap={8}><Icon w={16} h={14} c="#eee" sw={1.200}><path d="M5.500 3.500h9V11H4M15.500 5.500v3M1 3.500h5M1.500 3v4q2 2 4 0V3M2.500.5v2M4.500.5v2M3.500 8v4" /><path d="M7 5.500h4V9H7z" fill="#eee" stroke="none" /></Icon></TrayItem>
        <TrayItem $gap={0}><Icon w={17} h={15} c="#eee" sw={1.200}><path d="M6 2h9.500v8H4.500M6 13.500h5M8 10v3M1 1h4v4H1zM3 5v9" /><path d="m11.500 5 5 9.500h-10z" fill="#f6b21a" stroke="none" /><path d="M11.500 8.500v3M11.500 12.300v1" stroke="#222" /></Icon></TrayItem>
        <Lang>ENG</Lang>
        <Clock>06:38<br />07-10-2023</Clock>
        <Task $w={46}>
          <Icon w={17} h={17} c="#eee" sw={1.200}><path d="M.8 1h15.400v11.500H11L8.500 15 6 12.500H.8z" /></Icon>
        </Task>
      </Tray>
      <PeekEdge />
    </Taskbar>
  );
}

export default function App() {
  return (
    <Window>
      <Global />
      <TitleBar>
        <TableauMark size={16} />
        <TitleText>Tableau - Analysing Housing Prices in Metropolitan Areas of India - Tableau license expires in 3 days</TitleText>
        <WindowButtons>
          <Icon w={10} h={10} c="#000"><path d="M0 5.500h10" /></Icon>
          <Icon w={10} h={10} c="#000"><path d="M.5 2.500h7v7h-7zM2.500 2.500v-2h7v7h-2" /></Icon>
          <Icon w={10} h={10} c="#000" sw={1.100}><path d="m.3.300 9.400 9.400M9.700.300.3 9.700" /></Icon>
        </WindowButtons>
      </TitleBar>
      <MenuBar>{MENU.map(([label, w]) => <MenuItem key={label} $w={w}>{label}</MenuItem>)}</MenuBar>
      <ToolbarRow />
      <Main>
        <DataPanel />
        <Cards />
        <WorkArea />
      </Main>
      <SheetTabs />
      <Status />
      <TaskBar />
    </Window>
  );
}
